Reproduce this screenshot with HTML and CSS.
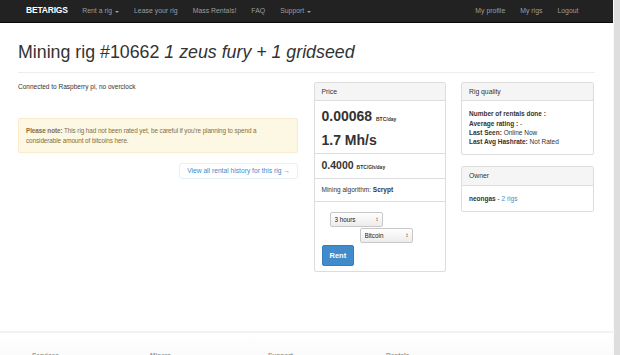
FILE: index.html
```html
<!DOCTYPE html>
<html lang="en">
<head>
    <meta charset="UTF-8">
    <title>Mining rig #10662 - Betarigs</title>
    <link rel="stylesheet" href="styles.css">
</head>
<body>

    <div class="page">
        <nav class="navbar">
            <a class="brand" href="#">BETARIGS</a>
            <ul class="nav">
                <li><a href="#">Rent a rig <span class="caret"></span></a></li>
                <li><a href="#">Lease your rig</a></li>
                <li><a href="#">Mass Rentals!</a></li>
                <li><a href="#">FAQ</a></li>
                <li><a href="#">Support <span class="caret"></span></a></li>
            </ul>
            <ul class="nav nav-right">
                <li><a href="#">My profile</a></li>
                <li><a href="#">My rigs</a></li>
                <li><a href="#">Logout</a></li>
            </ul>
        </nav>

        <div class="container">
            <div class="page-header">
                <h1>Mining rig #10662 <em>1 zeus fury + 1 gridseed</em></h1>
            </div>

            <div class="row">
                <div class="col-main">
                    <p class="description">Connected to Raspberry pi, no overclock</p>

                    <div class="alert">
                        <strong>Please note:</strong> This rig had not been rated yet, be careful if you're planning to spend a considerable amount of bitcoins here.
                    </div>

                    <div class="history">
                        <a class="btn-history" href="#">View all rental history for this rig &rarr;</a>
                    </div>
                </div>

                <div class="col-side">
                    <div class="panel">
                        <div class="panel-heading">Price</div>
                        <div class="list-item price-big">
                            <div>0.00068 <small>BTC/day</small></div>
                            <div>1.7 Mh/s</div>
                        </div>
                        <div class="list-item price-unit">0.4000 <small>BTC/Gh/day</small></div>
                        <div class="list-item algo">Mining algorithm: <strong>Scrypt</strong></div>
                        <form class="list-item rent-form">
                            <label class="select-wrap duration">
                                <select>
                                    <option>3 hours</option>
                                    <option>6 hours</option>
                                    <option>12 hours</option>
                                    <option>24 hours</option>
                                </select>
                            </label>
                            <label class="select-wrap currency">
                                <select>
                                    <option>Bitcoin</option>
                                    <option>Litecoin</option>
                                </select>
                            </label>
                            <button class="btn-rent" type="button">Rent</button>
                        </form>
                    </div>
                </div>

                <div class="col-side">
                    <div class="panel">
                        <div class="panel-heading">Rig quality</div>
                        <div class="panel-body">
                            <strong>Number of rentals done :</strong><br>
                            <strong>Average rating :</strong> -<br>
                            <strong>Last Seen:</strong> Online Now<br>
                            <strong>Last Avg Hashrate:</strong> Not Rated
                        </div>
                    </div>

                    <div class="panel">
                        <div class="panel-heading">Owner</div>
                        <div class="panel-body">
                            <strong>neongas</strong> - <a href="#">2 rigs</a>
                        </div>
                    </div>
                </div>
            </div>
        </div>

        <footer class="footer">
            <div class="footer-cols">
                <h5>Services</h5>
                <h5>Miners</h5>
                <h5>Support</h5>
                <h5>Rentals</h5>
            </div>
        </footer>
    </div>

    <div class="scrollbar"></div>

</body>
</html>
```

FILE: styles.css
```css
body {
    margin: 0;
    display: flex;
    height: 355px;
    overflow: hidden;
    font-family: "Liberation Sans", Arial, sans-serif;
    font-size: 6.5px;
    line-height: 9.3px;
    color: #333;
    background: #fff;
}

a {
    color: #428bca;
    text-decoration: none;
}

.page {
    flex: 1;
    min-width: 0;
    overflow: hidden;
}

.scrollbar {
    width: 6px;
    border-left: 1px solid #fafafa;
    background: #dedede;
}

/* top bar */
.navbar {
    display: flex;
    align-items: center;
    height: 22px;
    padding: 0 27px 0 19px;
    background: #222;
    border-bottom: 1px solid #080808;
}

.brand {
    padding: 0 7px;
    color: #fff;
    font-size: 8.5px;
    font-weight: bold;
    letter-spacing: -0.2px;
}

.nav {
    display: flex;
    margin: 0;
    padding: 0;
    list-style: none;
}

.nav a {
    display: block;
    padding: 0 7.5px;
    color: #9d9d9d;
    font-size: 6.9px;
}

.nav-right {
    margin-left: auto;
}

.caret {
    display: inline-block;
    width: 0;
    height: 0;
    margin-left: 1px;
    vertical-align: middle;
    border-top: 2px solid #9d9d9d;
    border-left: 2px solid transparent;
    border-right: 2px solid transparent;
}

/* content */
.container {
    padding: 0 18px;
}

.page-header {
    margin-top: 20px;
    padding-bottom: 10px;
    border-bottom: 1px solid #eee;
}

h1 {
    margin: 0;
    font-size: 17.8px;
    line-height: 19px;
    font-weight: normal;
    color: #333;
}

.row {
    display: grid;
    grid-template-columns: 280px 132px 133px;
    column-gap: 15.5px;
    margin-top: 9px;
    align-items: start;
}

.description {
    margin: 0 0 27px;
}

.alert {
    padding: 7px 7px 7px 7px;
    border: 1px solid #faebcc;
    border-radius: 2px;
    background: #fcf8e3;
    color: #8a6d3b;
    font-size: 6.4px;
    line-height: 9.6px;
    letter-spacing: -0.1px;
}

.history {
    display: flex;
    justify-content: flex-end;
    margin-top: 10px;
}

.btn-history {
    padding: 2px 7px;
    border: 1px solid #e6eef6;
    border-radius: 3px;
    background: #fff;
    font-size: 6.7px;
}

/* panels */
.panel {
    margin-bottom: 11px;
    border: 1px solid #ddd;
    border-radius: 2px;
    background: #fff;
}

.panel-heading {
    padding: 4px 7px;
    background: #f5f5f5;
    border-bottom: 1px solid #ddd;
    font-size: 6.8px;
}

.panel-body {
    padding: 8px 7px 8px;
}

.list-item {
    padding: 5px 7px;
    border-bottom: 1px solid #ddd;
}

.list-item:last-child {
    border-bottom: none;
}

.list-item small {
    font-size: 5px;
}

.price-big {
    padding: 5px 7px 3px;
    font-size: 14px;
    line-height: 20.5px;
    font-weight: bold;
}

.price-unit {
    padding: 4px 7px 4px;
    font-size: 10.5px;
    line-height: 14px;
    font-weight: bold;
}

.algo {
    padding: 6px 7px;
}

.algo strong {
    color: #333;
}

.rent-form {
    display: flex;
    flex-direction: column;
    align-items: flex-start;
    padding: 10px 7px 5px;
}

.select-wrap {
    position: relative;
    display: block;
}

.select-wrap::after {
    content: "\2195";
    position: absolute;
    right: 4px;
    top: 3px;
    font-size: 6px;
    line-height: 9px;
    color: #333;
    pointer-events: none;
}

select {
    display: block;
    height: 15px;
    padding: 0 4px;
    border: 1px solid #c8c8c8;
    border-radius: 2px;
    background: linear-gradient(#fff, #ececec);
    font-family: "Liberation Sans", Arial, sans-serif;
    font-size: 6.3px;
    color: #222;
    appearance: none;
    -webkit-appearance: none;
}

.duration {
    margin-left: 8px;
}

.duration select {
    width: 53px;
}

.currency {
    margin: 1px 0 2px 38px;
}

.currency select {
    width: 53px;
}

.btn-rent {
    height: 21px;
    padding: 0 7px;
    border: 1px solid #357ebd;
    border-radius: 2px;
    background: #428bca;
    color: #fff;
    font-family: "Liberation Sans", Arial, sans-serif;
    font-size: 7.5px;
    font-weight: bold;
}

/* footer */
.footer {
    margin-top: 48px;
    border-top: 2px solid #f2f2f2;
    background: linear-gradient(#fff, #f7f7f7);
    height: 40px;
}

.footer-cols {
    display: grid;
    grid-template-columns: repeat(4, 118px);
    padding: 18px 0 0 32px;
}

.footer-cols h5 {
    margin: 0;
    font-size: 6.5px;
    font-weight: bold;
    color: #999;
}
```
